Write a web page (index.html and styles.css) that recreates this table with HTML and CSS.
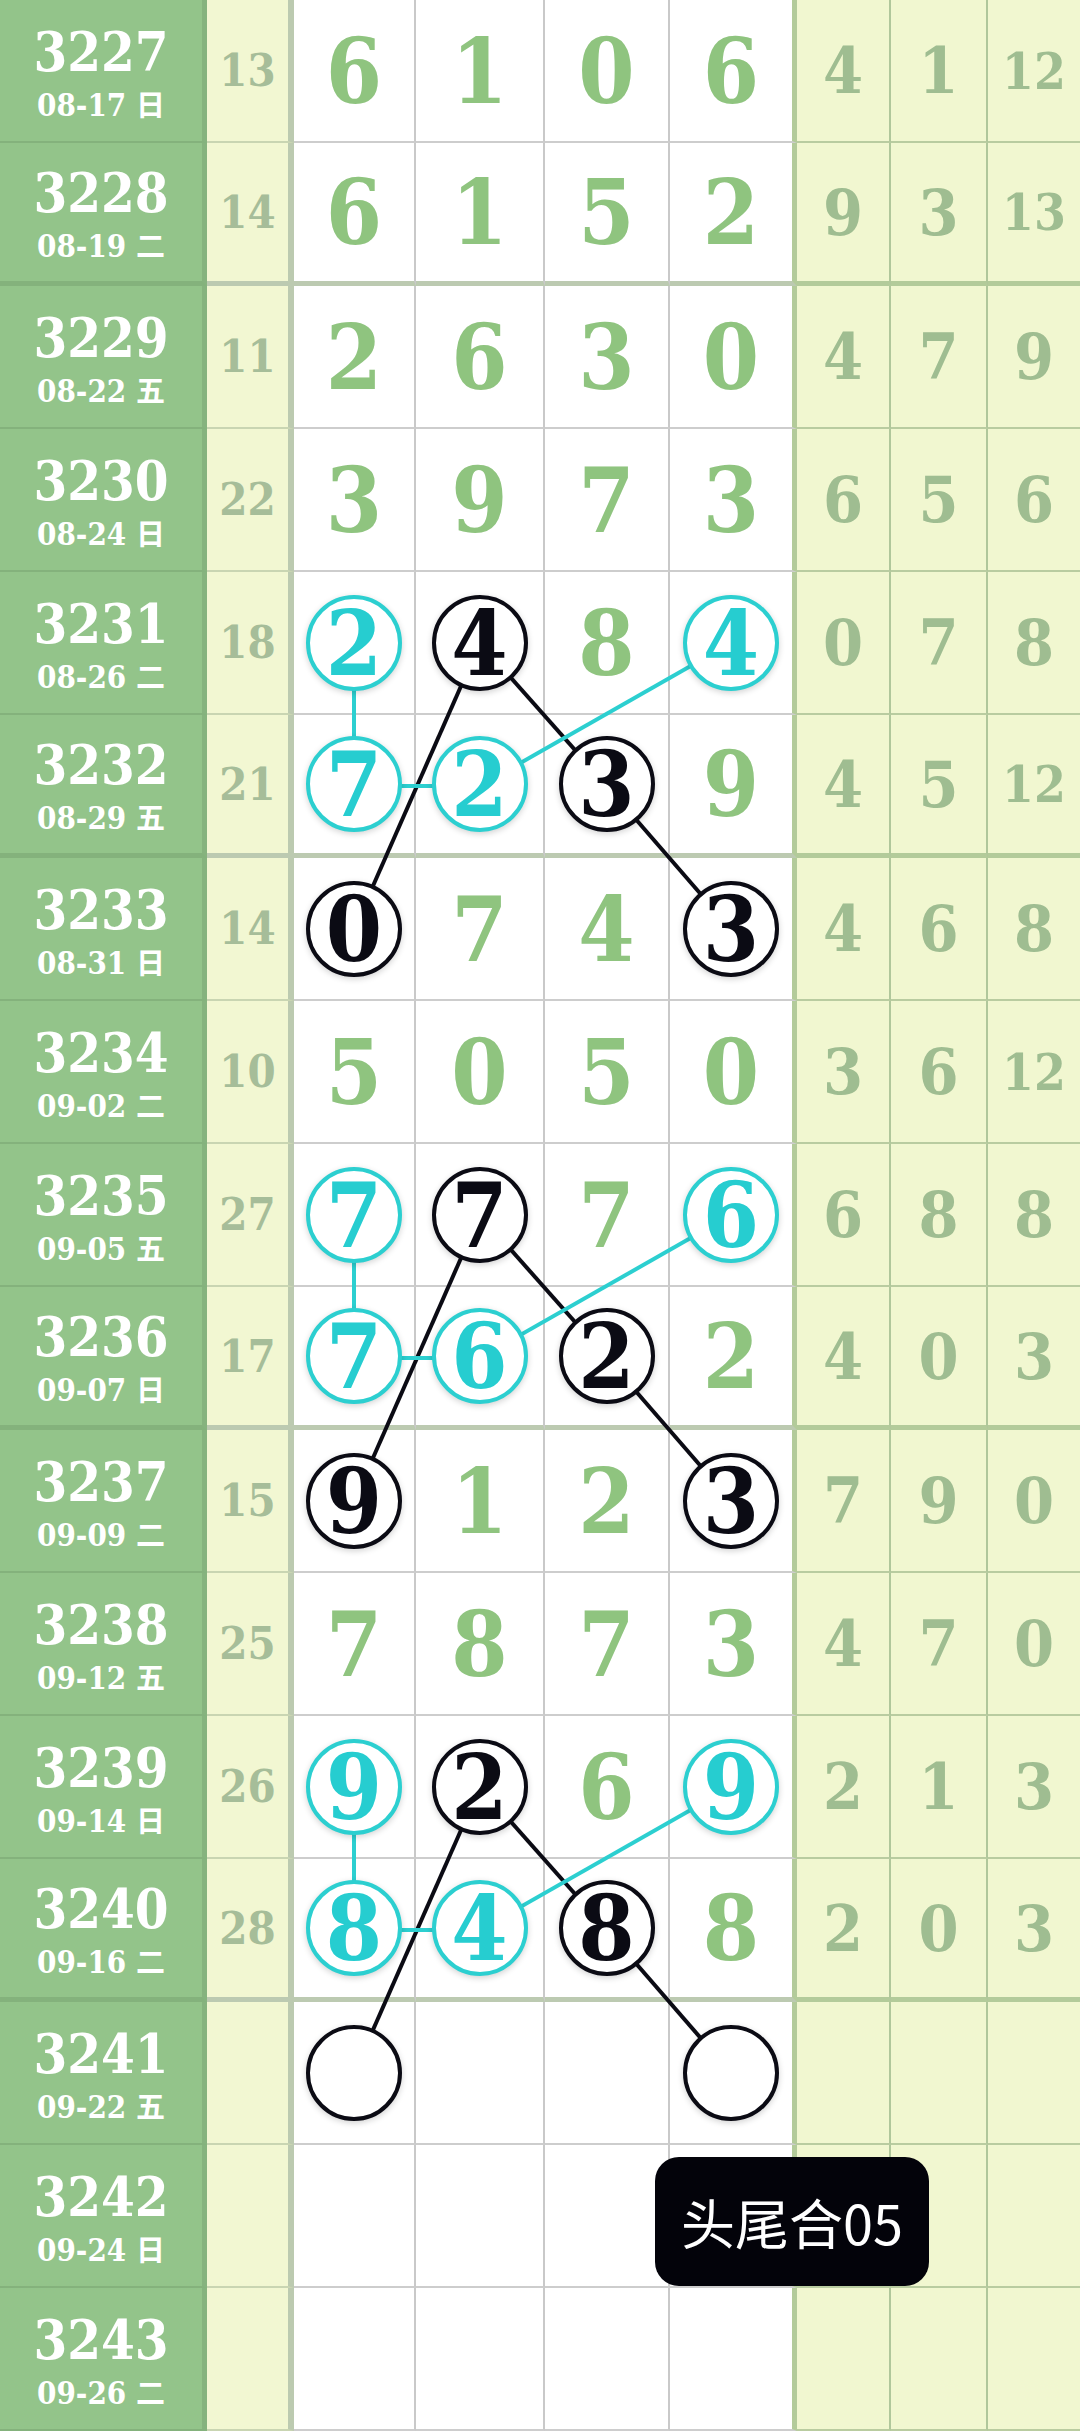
FILE: index.html
```html
<!DOCTYPE html>
<html>
<head>
	<meta charset="UTF-8"/>
	<link rel="stylesheet" href="styles.css">
</head>
<body>
<div class="chart">
	<div class="row">
		<div class="cell date"><b>3227</b><span>08-17 <i>日</i></span></div>
		<div class="cell sum">13</div>
		<div class="cell num">6</div><div class="cell num">1</div><div class="cell num">0</div><div class="cell num last">6</div>
		<div class="cell side">4</div><div class="cell side">1</div><div class="cell side two">12</div>
	</div>
	<div class="row end">
		<div class="cell date"><b>3228</b><span>08-19 <i>二</i></span></div>
		<div class="cell sum">14</div>
		<div class="cell num">6</div><div class="cell num">1</div><div class="cell num">5</div><div class="cell num last">2</div>
		<div class="cell side">9</div><div class="cell side">3</div><div class="cell side two">13</div>
	</div>
	<div class="row">
		<div class="cell date"><b>3229</b><span>08-22 <i>五</i></span></div>
		<div class="cell sum">11</div>
		<div class="cell num">2</div><div class="cell num">6</div><div class="cell num">3</div><div class="cell num last">0</div>
		<div class="cell side">4</div><div class="cell side">7</div><div class="cell side">9</div>
	</div>
	<div class="row">
		<div class="cell date"><b>3230</b><span>08-24 <i>日</i></span></div>
		<div class="cell sum">22</div>
		<div class="cell num">3</div><div class="cell num">9</div><div class="cell num">7</div><div class="cell num last">3</div>
		<div class="cell side">6</div><div class="cell side">5</div><div class="cell side">6</div>
	</div>
	<div class="row">
		<div class="cell date"><b>3231</b><span>08-26 <i>二</i></span></div>
		<div class="cell sum">18</div>
		<div class="cell num"><span class="ball blue">2</span></div><div class="cell num"><span class="ball dark">4</span></div><div class="cell num">8</div><div class="cell num last"><span class="ball blue">4</span></div>
		<div class="cell side">0</div><div class="cell side">7</div><div class="cell side">8</div>
	</div>
	<div class="row end">
		<div class="cell date"><b>3232</b><span>08-29 <i>五</i></span></div>
		<div class="cell sum">21</div>
		<div class="cell num"><span class="ball blue">7</span></div><div class="cell num"><span class="ball blue">2</span></div><div class="cell num"><span class="ball dark">3</span></div><div class="cell num last">9</div>
		<div class="cell side">4</div><div class="cell side">5</div><div class="cell side two">12</div>
	</div>
	<div class="row">
		<div class="cell date"><b>3233</b><span>08-31 <i>日</i></span></div>
		<div class="cell sum">14</div>
		<div class="cell num"><span class="ball dark">0</span></div><div class="cell num">7</div><div class="cell num">4</div><div class="cell num last"><span class="ball dark">3</span></div>
		<div class="cell side">4</div><div class="cell side">6</div><div class="cell side">8</div>
	</div>
	<div class="row">
		<div class="cell date"><b>3234</b><span>09-02 <i>二</i></span></div>
		<div class="cell sum">10</div>
		<div class="cell num">5</div><div class="cell num">0</div><div class="cell num">5</div><div class="cell num last">0</div>
		<div class="cell side">3</div><div class="cell side">6</div><div class="cell side two">12</div>
	</div>
	<div class="row">
		<div class="cell date"><b>3235</b><span>09-05 <i>五</i></span></div>
		<div class="cell sum">27</div>
		<div class="cell num"><span class="ball blue">7</span></div><div class="cell num"><span class="ball dark">7</span></div><div class="cell num">7</div><div class="cell num last"><span class="ball blue">6</span></div>
		<div class="cell side">6</div><div class="cell side">8</div><div class="cell side">8</div>
	</div>
	<div class="row end">
		<div class="cell date"><b>3236</b><span>09-07 <i>日</i></span></div>
		<div class="cell sum">17</div>
		<div class="cell num"><span class="ball blue">7</span></div><div class="cell num"><span class="ball blue">6</span></div><div class="cell num"><span class="ball dark">2</span></div><div class="cell num last">2</div>
		<div class="cell side">4</div><div class="cell side">0</div><div class="cell side">3</div>
	</div>
	<div class="row">
		<div class="cell date"><b>3237</b><span>09-09 <i>二</i></span></div>
		<div class="cell sum">15</div>
		<div class="cell num"><span class="ball dark">9</span></div><div class="cell num">1</div><div class="cell num">2</div><div class="cell num last"><span class="ball dark">3</span></div>
		<div class="cell side">7</div><div class="cell side">9</div><div class="cell side">0</div>
	</div>
	<div class="row">
		<div class="cell date"><b>3238</b><span>09-12 <i>五</i></span></div>
		<div class="cell sum">25</div>
		<div class="cell num">7</div><div class="cell num">8</div><div class="cell num">7</div><div class="cell num last">3</div>
		<div class="cell side">4</div><div class="cell side">7</div><div class="cell side">0</div>
	</div>
	<div class="row">
		<div class="cell date"><b>3239</b><span>09-14 <i>日</i></span></div>
		<div class="cell sum">26</div>
		<div class="cell num"><span class="ball blue">9</span></div><div class="cell num"><span class="ball dark">2</span></div><div class="cell num">6</div><div class="cell num last"><span class="ball blue">9</span></div>
		<div class="cell side">2</div><div class="cell side">1</div><div class="cell side">3</div>
	</div>
	<div class="row end">
		<div class="cell date"><b>3240</b><span>09-16 <i>二</i></span></div>
		<div class="cell sum">28</div>
		<div class="cell num"><span class="ball blue">8</span></div><div class="cell num"><span class="ball blue">4</span></div><div class="cell num"><span class="ball dark">8</span></div><div class="cell num last">8</div>
		<div class="cell side">2</div><div class="cell side">0</div><div class="cell side">3</div>
	</div>
	<div class="row">
		<div class="cell date"><b>3241</b><span>09-22 <i>五</i></span></div>
		<div class="cell sum"></div>
		<div class="cell num"><span class="ball dark"></span></div><div class="cell num"></div><div class="cell num"></div><div class="cell num last"><span class="ball dark"></span></div>
		<div class="cell side"></div><div class="cell side"></div><div class="cell side"></div>
	</div>
	<div class="row">
		<div class="cell date"><b>3242</b><span>09-24 <i>日</i></span></div>
		<div class="cell sum"></div>
		<div class="cell num"></div><div class="cell num"></div><div class="cell num"></div><div class="cell num last"></div>
		<div class="cell side"></div><div class="cell side"></div><div class="cell side"></div>
	</div>
	<div class="row">
		<div class="cell date"><b>3243</b><span>09-26 <i>二</i></span></div>
		<div class="cell sum"></div>
		<div class="cell num"></div><div class="cell num"></div><div class="cell num"></div><div class="cell num last"></div>
		<div class="cell side"></div><div class="cell side"></div><div class="cell side"></div>
	</div>

	<!--走势连线-->
	<svg class="links" width="1080" height="2432">
		<g stroke="#0b0b14" stroke-width="4">
			<line x1="480" y1="643" x2="354" y2="929"/>
			<line x1="480" y1="643" x2="607" y2="786"/>
			<line x1="607" y1="786" x2="731" y2="929"/>
			<line x1="480" y1="1215" x2="354" y2="1501"/>
			<line x1="480" y1="1215" x2="607" y2="1358"/>
			<line x1="607" y1="1358" x2="731" y2="1501"/>
			<line x1="480" y1="1787" x2="354" y2="2073"/>
			<line x1="480" y1="1787" x2="607" y2="1930"/>
			<line x1="607" y1="1930" x2="731" y2="2073"/>
		</g>
		<g stroke="#2ccfd0" stroke-width="4">
			<line x1="354" y1="643" x2="354" y2="786"/>
			<line x1="354" y1="786" x2="480" y2="786"/>
			<line x1="480" y1="786" x2="731" y2="643"/>
			<line x1="354" y1="1215" x2="354" y2="1358"/>
			<line x1="354" y1="1358" x2="480" y2="1358"/>
			<line x1="480" y1="1358" x2="731" y2="1215"/>
			<line x1="354" y1="1787" x2="354" y2="1930"/>
			<line x1="354" y1="1930" x2="480" y2="1930"/>
			<line x1="480" y1="1930" x2="731" y2="1787"/>
		</g>
	</svg>

	<div class="tip">头尾合05</div>
</div>
</body>
</html>
```

FILE: styles.css
```css
*{
	margin:0;
	padding:0;
	box-sizing:border-box;
}
body{
	background:#fff;
	font-family:"DejaVu Serif Condensed","DejaVu Serif",serif;
	font-stretch:condensed;
}
.chart{
	position:relative;
	width:1080px;
	height:2432px;
	overflow:hidden;
}
.row{
	display:grid;
	grid-template-columns:207px 87px 122px 129px 125px 127px 94px 97px 92px;
	height:143px;
}
.cell{
	display:flex;
	align-items:center;
	justify-content:center;
	font-weight:bold;
	border-bottom:2px solid #cdcdcd;
	border-right:2px solid #c9c9c9;
}
.row.end .cell{
	border-bottom:5px solid #bccab1;
}
.date{
	flex-direction:column;
	background:#93c48a;
	color:#fff;
	border-right:5px solid #86b37e;
	border-bottom-color:#84b27c;
	padding-top:2px;
}
.row.end .date{
	border-bottom-color:#84b27c;
}
.date b{
	font-size:54px;
	line-height:64px;
}
.date span{
	font-size:31px;
	line-height:38px;
}
.date i{
	font-style:normal;
	font-family:"Noto Sans CJK SC",sans-serif;
	font-weight:bold;
	font-size:29px;
}
.sum{
	background:#f2f7d2;
	color:#a6bd99;
	font-size:45px;
	border-right:6px solid #bccab0;
	border-bottom-color:#c9d5b2;
}
.num{
	color:#8fc47f;
	font-size:90px;
}
.num.last{
	border-right:5px solid #b3cb9a;
}
.side{
	background:#f1f7d0;
	color:#9fbd91;
	font-size:64px;
	border-right-color:#b0c79b;
	border-bottom-color:#b9cca0;
}
.row.end .side{
	border-bottom-color:#b3cb9a;
}
.side.two{
	font-size:51px;
}
.side:last-child{
	border-right:0;
}
.ball{
	position:relative;
	z-index:2;
	display:flex;
	align-items:center;
	justify-content:center;
	width:96px;
	height:96px;
	border-radius:50%;
	border:4px solid;
	background:#fff;
	box-shadow:0 2px 6px rgba(0,0,0,.18);
}
.ball.dark{
	color:#0b0b14;
	border-color:#0b0b14;
}
.ball.blue{
	color:#26cdd0;
	border-color:#2ccfd0;
}
.links{
	position:absolute;
	left:0;
	top:0;
	z-index:1;
	pointer-events:none;
}
.tip{
	position:absolute;
	z-index:3;
	left:655px;
	top:2157px;
	width:274px;
	height:129px;
	line-height:129px;
	text-align:center;
	background:#03030a;
	color:#fff;
	border-radius:24px;
	font-family:"Noto Sans CJK SC",sans-serif;
	font-stretch:normal;
	font-size:54px;
}
```
